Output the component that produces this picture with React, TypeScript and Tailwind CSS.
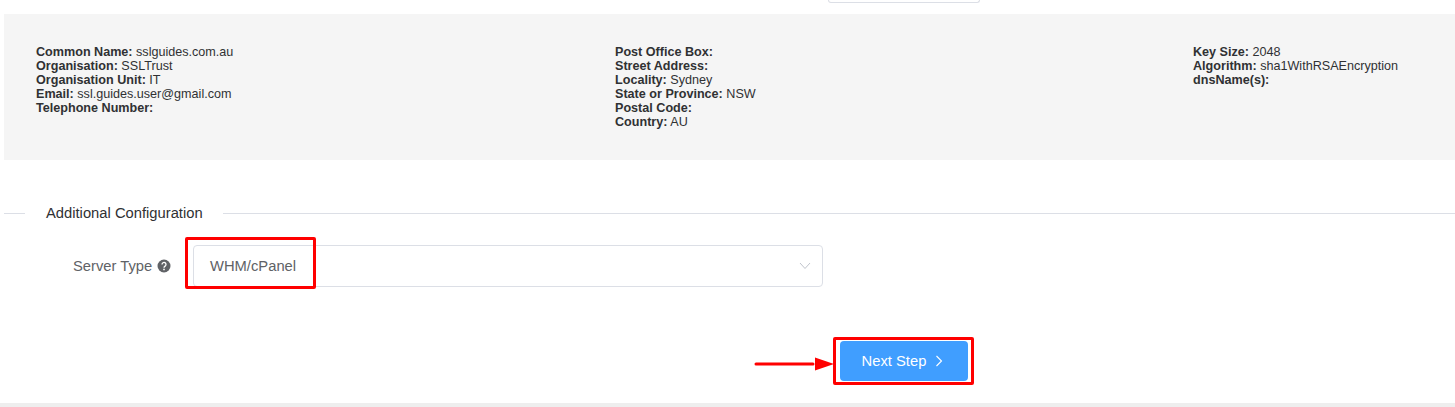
import React from "react";

const Row = ({ k, v }: { k: string; v?: string }) => (
  <div>
    <b className="font-bold">{k}</b>
    {v ? ` ${v}` : ""}
  </div>
);

export default function App() {
  return (
    <div className="relative w-[1455px] h-[407px] overflow-hidden bg-white font-['Liberation_Sans',Arial,sans-serif] flex flex-col">
      <div className="h-[14px] shrink-0">
        <div className="ml-[828px] w-[152px] h-[3px] border border-t-0 border-[#dcdfe6] rounded-b-[4px]" />
      </div>

      <div className="ml-[4px] h-[146px] shrink-0 bg-[#f5f5f5] pl-[32px] pt-[31px] grid grid-cols-[579px_578px_1fr] text-[12.6px] leading-[14px] text-[#303133]">
        <div>
          <Row k="Common Name:" v="sslguides.com.au" />
          <Row k="Organisation:" v="SSLTrust" />
          <Row k="Organisation Unit:" v="IT" />
          <Row k="Email:" v="ssl.guides.user@gmail.com" />
          <Row k="Telephone Number:" />
        </div>
        <div>
          <Row k="Post Office Box:" />
          <Row k="Street Address:" />
          <Row k="Locality:" v="Sydney" />
          <Row k="State or Province:" v="NSW" />
          <Row k="Postal Code:" />
          <Row k="Country:" v="AU" />
        </div>
        <div>
          <Row k="Key Size:" v="2048" />
          <Row k="Algorithm:" v="sha1WithRSAEncryption" />
          <Row k="dnsName(s):" />
        </div>
      </div>

      <div className="ml-[4px] mt-[45px] h-[16px] flex items-center text-[14.75px] text-[#303133]">
        <div className="w-[21px] h-px bg-[#dcdfe6]" />
        <span className="ml-[21px] leading-[16px]">Additional Configuration</span>
        <div className="ml-[20px] flex-1 h-px bg-[#dcdfe6]" />
      </div>

      <div className="mt-[24px] flex items-center h-[42px] text-[14.75px] text-[#606266]">
        <div className="w-[193px] shrink-0 flex items-center pl-[73px]">
          <span>Server Type</span>
          <svg className="ml-[5px]" width="14" height="14" viewBox="0 0 14 14">
            <circle cx="7" cy="7" r="6.5" fill="#606266" />
            <path d="M5 5.4a2 2 0 1 1 3.1 1.7c-.7.5-1.1.8-1.1 1.6" fill="none" stroke="#fff" strokeWidth="1.3" />
            <circle cx="7" cy="10.4" r="0.85" fill="#fff" />
          </svg>
        </div>
        <div className="w-[630px] h-[42px] border border-[#dcdfe6] rounded-[4px] flex items-center justify-between pl-[16px] pr-[11px]">
          <span>WHM/cPanel</span>
          <svg width="12" height="8" viewBox="0 0 12 8" fill="none">
            <path d="M1 1l5 5.5L11 1" stroke="#c0c4cc" strokeWidth="1" />
          </svg>
        </div>
      </div>

      <div className="mt-[54px] ml-[840px] w-[128px] h-[40px] bg-[#409eff] rounded-[4px] pr-[3px] text-white text-[14.75px] flex items-center justify-center gap-[9px]">
        <span>Next Step</span>
        <svg width="8" height="12" viewBox="0 0 8 12" fill="none">
          <path d="M1.5 1l5 5-5 5" stroke="#fff" strokeWidth="1.1" />
        </svg>
      </div>

      <div className="mt-auto h-[4px] bg-[#eeeeee]" />

      {/* annotations */}
      <div className="absolute left-[185px] top-[237px] w-[131px] h-[52px] border-[3px] border-[#ff0000] rounded-[2px]" />
      <div className="absolute left-[833px] top-[337px] w-[141px] h-[48px] border-[3px] border-[#ff0000] rounded-[2px]" />
      <svg className="absolute left-[753px] top-[354px]" width="84" height="20" viewBox="0 0 84 20">
        <path d="M3 10H60" stroke="#ff0000" strokeWidth="3" strokeLinecap="round" />
        <path d="M62 3.5L81 10 62 16.5z" fill="#ff0000" />
      </svg>
    </div>
  );
}
